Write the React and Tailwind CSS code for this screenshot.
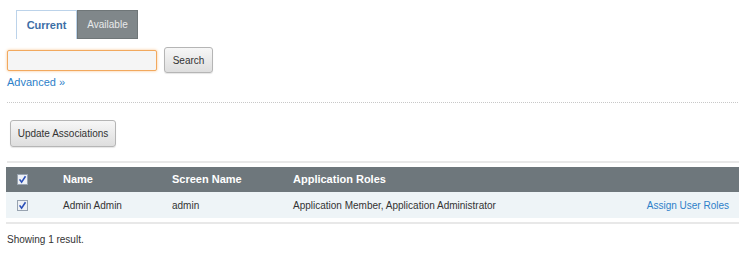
const Check = () => (
  <svg width="11" height="11" viewBox="0 0 11 11" className="block">
    <rect x="0.5" y="0.5" width="10" height="10" fill="#eef1f5" stroke="#98a3b0" />
    <path d="M2.6 5.4 L4.6 8.2 L8.5 2.3" fill="none" stroke="#2a4fb8" strokeWidth="1.6" />
  </svg>
);

const App = () => {
  const btn =
    "rounded-[3px] border border-[#b5b5b5] bg-gradient-to-b from-[#f7f7f7] to-[#dedede] text-[10px] text-[#333] shadow-[0_1px_1px_rgba(0,0,0,0.1)]";

  return (
    <div className="w-[745px] h-[254px] bg-white font-['Liberation_Sans',Arial,sans-serif] text-[#333] overflow-hidden">
      {/* Tabs */}
      <div className="flex pl-4 pt-[10px]">
        <div className="w-[61px] h-[29px] flex items-center justify-center border-l border-t border-r border-[#bcd3ea] bg-white text-[11px] font-bold text-[#3c6ea6]">
          Current
        </div>
        <div className="w-[61px] h-[29px] flex items-center justify-center bg-[#80878a] border border-[#6f7678] text-[10px] text-[#e8eaea]">
          Available
        </div>
      </div>

      {/* Search */}
      <div className="flex items-center gap-[7px] pl-[7px] mt-[8px]">
        <div className="w-[150px] h-[21px] rounded-[2px] border border-[#f2a95e] bg-[#f5f5f5] shadow-[0_0_3px_#f8c48e]" />
        <button className={`${btn} w-[49px] h-[26px] pt-[1px]`}>Search</button>
      </div>
      <div className="pl-[7px] mt-[2px] text-[11px] leading-[14px] text-[#2d7fc9]">Advanced »</div>

      {/* Divider */}
      <div className="mx-[7px] mt-[13px] border-t border-dotted border-[#c8c8c8]" />

      <div className="pl-[10px] mt-[17px]">
        <button className={`${btn} w-[106px] h-[27px]`}>Update Associations</button>
      </div>

      <div className="ml-[7px] mr-[6px] mt-[14px] h-[2px] bg-[#e8e8e8]" />

      {/* Table */}
      <div className="ml-[6px] mr-[6px] mt-[4px]">
        <div className="flex items-center h-[25px] bg-[#6e777c] text-white text-[11px] font-bold">
          <div className="w-[57px] pl-[11px]"><Check /></div>
          <div className="w-[109px]">Name</div>
          <div className="w-[121px]">Screen Name</div>
          <div className="flex-1">Application Roles</div>
        </div>
        <div className="flex items-center h-[26px] pt-[1px] bg-[#eef4f7] text-[10px] text-[#333]">
          <div className="w-[57px] pl-[11px]"><Check /></div>
          <div className="w-[109px]">Admin Admin</div>
          <div className="w-[121px]">admin</div>
          <div className="flex-1">Application Member, Application Administrator</div>
          <div className="pr-[10px] text-[#2d7fc9]">Assign User Roles</div>
        </div>
        <div className="mt-[4px] h-[2px] bg-[#e8e8e8]" />
      </div>

      <div className="pl-[7px] mt-[8px] text-[10px] text-[#333]">Showing 1 result.</div>
    </div>
  );
};

export default App;
